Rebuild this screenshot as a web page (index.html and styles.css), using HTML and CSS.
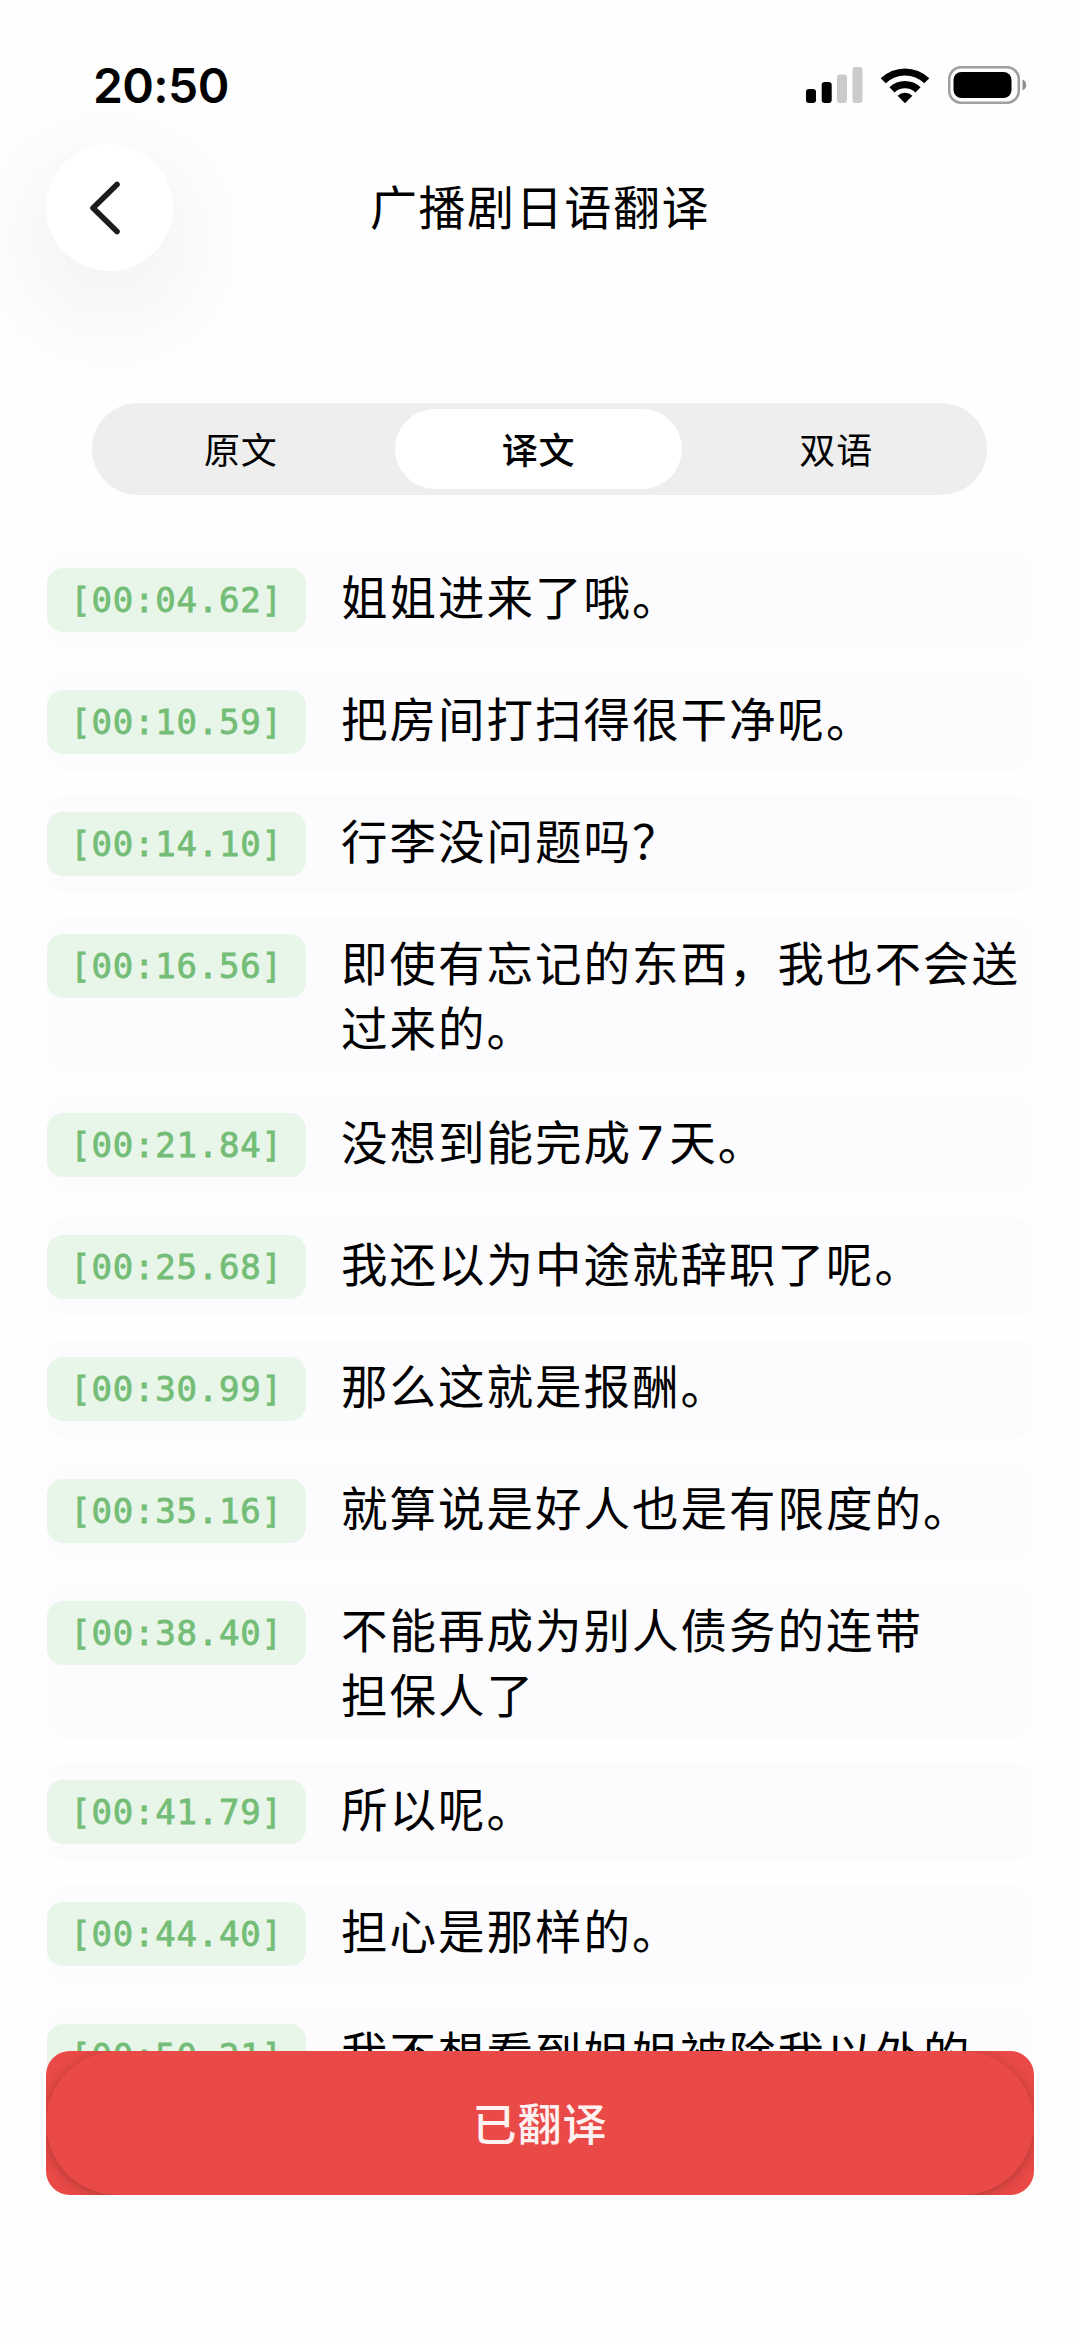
FILE: index.html
```html
<!DOCTYPE html>
<html lang="zh-CN">
<head>
  <meta charset="UTF-8">
  <meta name="viewport" content="width=device-width, initial-scale=1.0">
  <title>广播剧日语翻译</title>
  <link rel="stylesheet" href="styles.css">
</head>
<body>
  <div class="screen">
    <div class="status-bar">
      <span class="time">20:50</span>
      <div class="status-icons">
        <svg class="signal" width="57" height="38" viewBox="0 0 57 38">
          <rect x="0" y="23" width="10" height="14" rx="3"/>
          <rect x="15.7" y="16" width="10" height="21" rx="3"/>
          <rect class="dim" x="31" y="8.5" width="10" height="28.5" rx="3"/>
          <rect class="dim" x="46.5" y="1" width="10" height="36" rx="3"/>
        </svg>
        <svg class="wifi" width="50" height="38" viewBox="0 0 50 38">
          <path d="M0.7 12.3 A34.8 34.8 0 0 1 49.3 12.3 L44.2 17.2 A27.5 27.5 0 0 0 5.8 17.2 Z"/>
          <path d="M9.4 21.2 A22.5 22.5 0 0 1 40.6 21.2 L35.4 26.4 A15.2 15.2 0 0 0 14.6 26.4 Z"/>
          <path d="M17.6 29.8 A10.5 10.5 0 0 1 32.4 29.8 L25 37.2 Z"/>
        </svg>
        <svg class="battery" width="79" height="38" viewBox="0 0 79 38">
          <rect class="shell" x="1.2" y="1.2" width="69.6" height="35.6" rx="12"/>
          <rect x="5.5" y="6" width="58" height="26" rx="8"/>
          <path class="cap" d="M74.5 13.5 C79.5 15.5 79.5 22.5 74.5 24.5 Z"/>
        </svg>
      </div>
    </div>

    <header class="header">
      <button class="back-btn" aria-label="返回">
        <svg width="32" height="56" viewBox="0 0 32 56">
          <path d="M28 4.5 L4 28 L28 51.5"/>
        </svg>
      </button>
      <h1>广播剧日语翻译</h1>
    </header>

    <div class="tabs">
      <button class="tab">原文</button>
      <button class="tab active">译文</button>
      <button class="tab">双语</button>
    </div>

    <div class="lyrics">
      <div class="line"><span class="stamp">[00:04.62]</span><p>姐姐进来了哦。</p></div>
      <div class="line"><span class="stamp">[00:10.59]</span><p>把房间打扫得很干净呢。</p></div>
      <div class="line"><span class="stamp">[00:14.10]</span><p>行李没问题吗？</p></div>
      <div class="line"><span class="stamp">[00:16.56]</span><p>即使有忘记的东西，我也不会送<br>过来的。</p></div>
      <div class="line"><span class="stamp">[00:21.84]</span><p>没想到能完成<span class="num">7</span>天。</p></div>
      <div class="line"><span class="stamp">[00:25.68]</span><p>我还以为中途就辞职了呢。</p></div>
      <div class="line"><span class="stamp">[00:30.99]</span><p>那么这就是报酬。</p></div>
      <div class="line"><span class="stamp">[00:35.16]</span><p>就算说是好人也是有限度的。</p></div>
      <div class="line"><span class="stamp">[00:38.40]</span><p>不能再成为别人债务的连带<br>担保人了</p></div>
      <div class="line"><span class="stamp">[00:41.79]</span><p>所以呢。</p></div>
      <div class="line"><span class="stamp">[00:44.40]</span><p>担心是那样的。</p></div>
      <div class="line"><span class="stamp">[00:50.21]</span><p>我不想看到姐姐被除我以外的</p></div>
    </div>

    <div class="footer">
      <button class="translate-btn">已翻译</button>
    </div>
  </div>
</body>
</html>
```
FILE: styles.css
```css
* {
  box-sizing: border-box;
}
body {
  margin: 0;
  background-color: #fefefe;
  font-family: Inter, "Noto Sans CJK SC", sans-serif;
  color: #000;
}
button {
  border: none;
  padding: 0;
  font-family: inherit;
  color: inherit;
}
.screen {
  position: relative;
  width: 1080px;
  height: 2339px;
  overflow: hidden;
}

/* 状态栏 */
.status-bar {
  display: flex;
  justify-content: space-between;
  align-items: center;
  height: 144px;
  padding: 26px 53px 0 93px;
}
.time {
  padding-top: 2px;
  font-size: 48px;
  font-weight: 600;
  line-height: 60px;
  letter-spacing: -0.6px;
}
.status-icons {
  display: flex;
  align-items: center;
}
.wifi {
  margin-left: 17px;
}
.battery {
  margin-left: 18px;
}
.dim {
  fill: #cbcbcb;
}
.shell {
  fill: none;
  stroke: #a0a0a0;
  stroke-width: 2.6;
}
.cap {
  fill: #8f8f8f;
}

/* 标题 */
.header {
  display: grid;
  grid-template-columns: 127px 1fr 127px;
  align-items: center;
  height: 127px;
  padding: 0 46px;
}
.back-btn {
  display: flex;
  align-items: center;
  justify-content: center;
  width: 127px;
  height: 127px;
  padding-right: 9px;
  border-radius: 50%;
  background-color: #fff;
  box-shadow: 0 32px 120px rgba(0, 0, 0, 0.09);
}
.back-btn path {
  fill: none;
  stroke: #1c1c1e;
  stroke-width: 5.6;
  stroke-linecap: round;
  stroke-linejoin: round;
}
h1 {
  margin: 0;
  text-align: center;
  font-size: 47px;
  font-weight: 400;
  line-height: 70px;
  letter-spacing: 1.6px;
}

/* 切换 */
.tabs {
  position: relative;
  display: grid;
  grid-template-columns: repeat(3, 1fr);
  gap: 10px;
  width: 895px;
  height: 92px;
  margin: 132px 0 0 92px;
  padding: 6px 7px 6px 5px;
  border-radius: 46px;
  background-color: #eee;
}
.tab {
  padding-bottom: 2px;
  border-radius: 40px;
  background: transparent;
  font-size: 36px;
  font-weight: 400;
  letter-spacing: 0.8px;
}
.tab.active {
  background-color: #fff;
  font-weight: 500;
}

/* 字幕列表 */
.lyrics {
  display: flex;
  flex-direction: column;
  gap: 24px;
  margin-top: 56px;
  padding: 0 47px;
}
.line {
  display: flex;
  flex-shrink: 0;
  align-items: flex-start;
  min-height: 98px;
  padding: 15px 0 10px;
  border-radius: 20px;
  background-color: #fcfcfe;
}
.stamp {
  flex-shrink: 0;
  width: 259px;
  height: 64px;
  margin: 2px 35px 0 0;
  border-radius: 16px;
  background-color: #e8f5e9;
  color: #74bd77;
  font-family: "DejaVu Sans Mono", monospace;
  font-size: 34px;
  line-height: 64px;
  letter-spacing: 0.8px;
  text-align: center;
  -webkit-text-stroke: 0.8px #74bd77;
}
.line p {
  margin: 0;
  font-size: 46.5px;
  line-height: 65px;
  letter-spacing: 2px;
  white-space: nowrap;
}
.num {
  margin: 0 4px 0 5px;
}

/* 底部按钮 */
.footer {
  position: absolute;
  left: 46px;
  right: 46px;
  bottom: 144px;
  height: 144px;
  overflow: hidden;
  border-radius: 24px;
  background-color: #ea4a47;
}
.translate-btn {
  width: 100%;
  height: 100%;
  padding-bottom: 3px;
  border-radius: 72px;
  background-color: #ea4a47;
  box-shadow: 0 2px 12px rgba(0, 0, 0, 0.25);
  color: #fff1f0;
  font-size: 44px;
  font-weight: 500;
  letter-spacing: 1px;
}
```
